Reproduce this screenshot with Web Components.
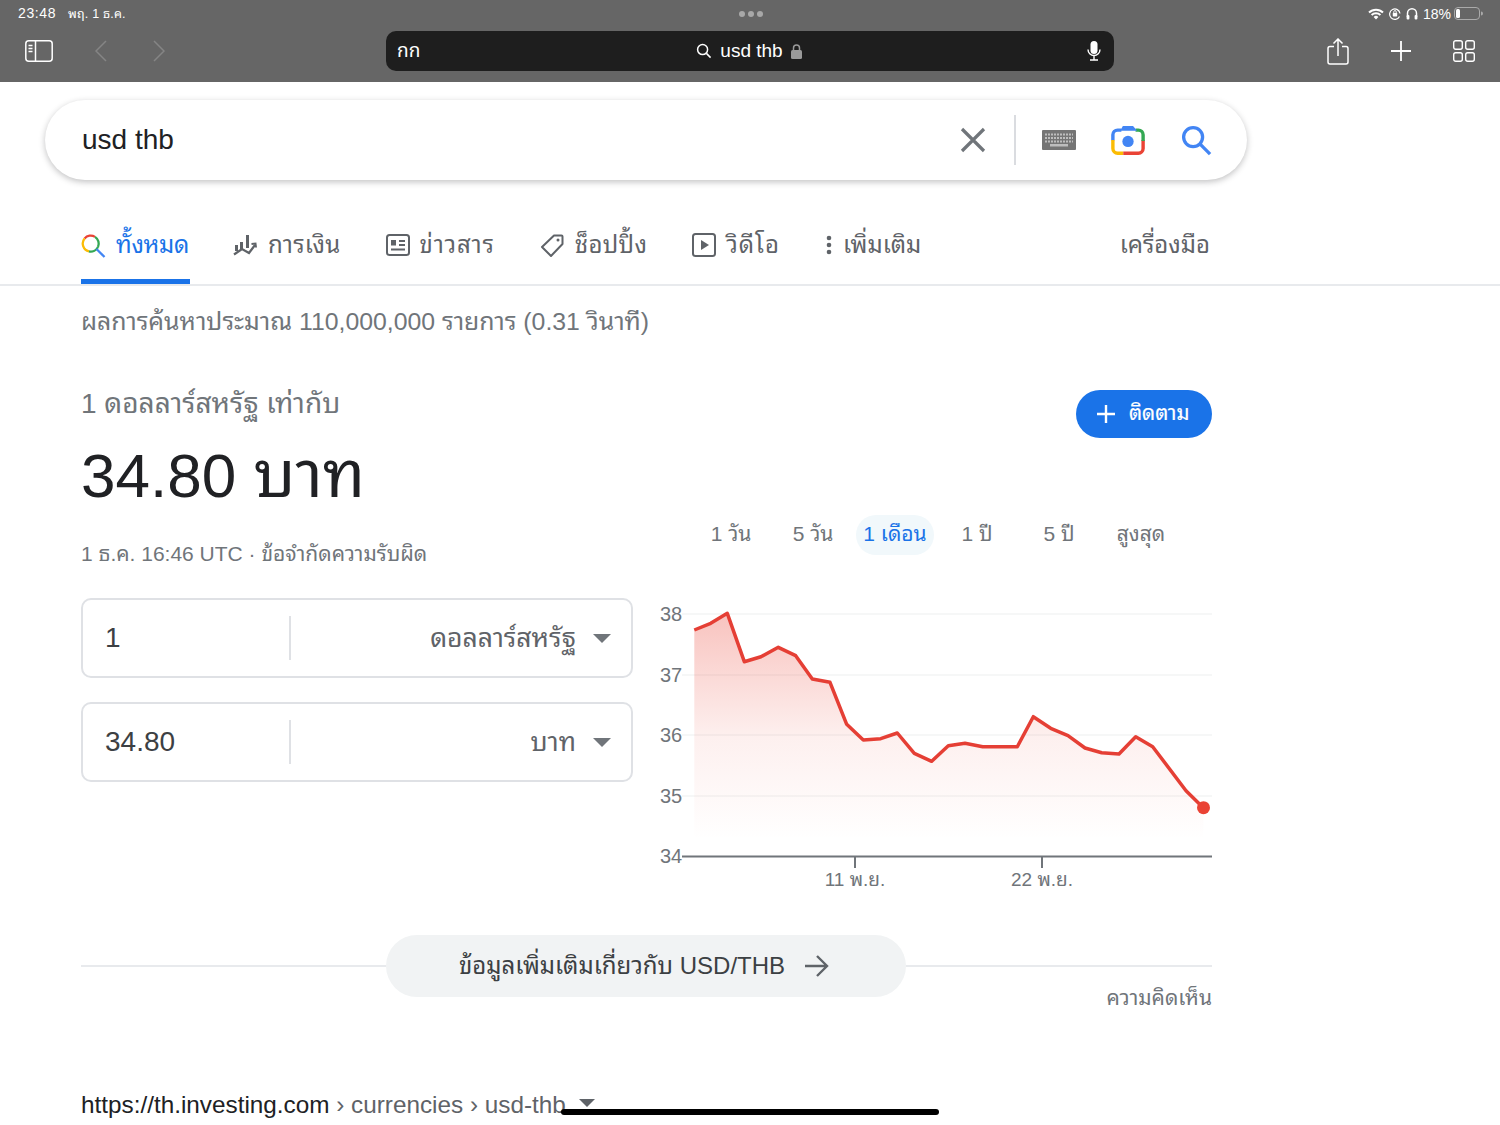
<!DOCTYPE html>
<html lang="th">
<head>
<meta charset="UTF-8">
<title>usd thb</title>
<style>
  html, body { margin: 0; padding: 0; background: #fff; }
  body { width: 1500px; height: 1125px; overflow: hidden; position: relative;
         font-family: "Liberation Sans", "Noto Sans Thai Looped", "Noto Serif Thai", Garuda, Loma, Waree, "TH Sarabun New", "Noto Sans", sans-serif; color: #202124; }
</style>
</head>
<body>
<safari-bar></safari-bar>
<search-box></search-box>
<search-tabs></search-tabs>
<result-stats></result-stats>
<currency-card></currency-card>
<more-about></more-about>
<result-link></result-link>
<home-bar></home-bar>

<script>
function make(name, html) {
  customElements.define(name, class extends HTMLElement {
    constructor() {
      super();
      this.attachShadow({mode: 'open'}).innerHTML = html;
    }
  });
}

make('safari-bar', `
<style>
  :host { display: block; height: 82px; background: #666; color: #fff; }
  .status { box-sizing: border-box; height: 29px; padding: 0 17px 2px 18px; display: grid; grid-template-columns: 1fr 30px 1fr; align-items: center; font-size: 14px; line-height: 16px; }
  .left { display: flex; gap: 12px; letter-spacing: .6px; align-items: baseline; }
  .left b { font-weight: 400; font-size: 12.500px; letter-spacing: .2px; }
  .dots { display: flex; gap: 3px; justify-content: center; }
  .dots i { width: 6px; height: 6px; border-radius: 50%; background: #a8a8a8; }
  .right { display: flex; gap: 5px; justify-content: flex-end; align-items: center; }
  .tools { height: 44px; padding: 0 25px; display: grid; grid-template-columns: 361px 728px 1fr; align-items: center; }
  .nav { display: flex; align-items: center; }
  .url { height: 40px; line-height: 40px; background: #1e1e1e; border-radius: 10px; padding: 0 13px 0 11px; display: grid; grid-template-columns: 1fr auto 1fr; align-items: center; font-size: 19px; }
  .mid { display: flex; align-items: center; gap: 8px; }
  .mic { justify-self: end; }
  .actions { display: flex; justify-content: flex-end; align-items: center; gap: 42px; }
  svg { display: block; }
</style>
<div class="status">
  <div class="left"><span>23:48</span><b>พฤ. 1 ธ.ค.</b></div>
  <div class="dots"><i></i><i></i><i></i></div>
  <div class="right">
    <svg width="16" height="12" viewBox="0 0 16 12"><path d="M1 4.500a10 10 0 0 1 14 0M3.600 7a6.400 6.400 0 0 1 8.800 0" fill="none" stroke="#fff" stroke-width="2"/><path d="M5.600 9a3.400 3.400 0 0 1 4.800 0L8 11.600z" fill="#fff"/></svg>
    <svg width="12" height="13" viewBox="0 0 12 13"><path d="M10.500 9.500A5.200 5.200 0 1 1 11 6.500" fill="none" stroke="#fff" stroke-width="1.200"/><rect x="3.800" y="6" width="4.400" height="3.400" rx=".6" fill="#fff"/><path d="M4.800 6V4.800a1.200 1.200 0 0 1 2.400 0V6" fill="none" stroke="#fff"/></svg>
    <svg width="12" height="13" viewBox="0 0 12 13"><path d="M1.500 10V6.300a4.500 4.500 0 0 1 9 0V10" fill="none" stroke="#fff" stroke-width="1.500"/><rect x=".6" y="8" width="2.800" height="4.500" rx="1" fill="#fff"/><rect x="8.600" y="8" width="2.800" height="4.500" rx="1" fill="#fff"/></svg>
    <span>18%</span>
    <svg style="margin-left:-2px" width="29" height="13" viewBox="0 0 29 13"><rect x=".5" y=".5" width="25" height="12" rx="3.500" fill="none" stroke="#aaa"/><rect x="2" y="2" width="4" height="9" rx="1.500" fill="#fff"/><path d="M27 4.500a2 2 0 0 1 0 4z" fill="#aaa"/></svg>
  </div>
</div>
<div class="tools">
  <div class="nav">
    <svg width="28" height="22" viewBox="0 0 28 22" fill="none" stroke="#fff" stroke-width="1.500"><rect x=".8" y=".8" width="26.400" height="20.400" rx="3"/><path d="M10.500 1v20"/><path d="M3.500 5.500h4M3.500 8.500h4M3.500 11.500h4" stroke-width="1.400"/></svg>
    <svg style="margin-left:42px" width="12" height="22" viewBox="0 0 12 22" fill="none" stroke="#858585" stroke-width="1.500"><path d="M11 1 1 11l10 10"/></svg>
    <svg style="margin-left:46px" width="12" height="22" viewBox="0 0 12 22" fill="none" stroke="#858585" stroke-width="1.500"><path d="m1 1 10 10L1 21"/></svg>
  </div>
  <div class="url">
    <span>กก</span>
    <div class="mid">
      <svg width="16" height="16" viewBox="0 0 16 16" fill="none" stroke="#fff" stroke-width="1.500"><circle cx="6.600" cy="6.600" r="5"/><path d="m10.400 10.400 4.200 4.200"/></svg>
      <span>usd thb</span>
      <svg width="11" height="15" viewBox="0 0 11 15"><rect y="6" width="11" height="9" rx="1.500" fill="#9a9a9a"/><path d="M2.500 6V4a3 3 0 0 1 6 0v2" fill="none" stroke="#9a9a9a" stroke-width="1.500"/></svg>
    </div>
    <svg class="mic" width="14" height="20" viewBox="0 0 14 20"><rect x="3.500" y="0" width="7" height="13" rx="3.500" fill="#fff"/><path d="M1 8.500a6 6 0 0 0 12 0M7 14.500V19M3 19h8" fill="none" stroke="#fff" stroke-width="1.400"/></svg>
  </div>
  <div class="actions">
    <svg width="22" height="27" viewBox="0 0 22 27" fill="none" stroke="#fff" stroke-width="1.500"><path d="M7 8.500H3a2 2 0 0 0-2 2v13.500a2 2 0 0 0 2 2h16a2 2 0 0 0 2-2V10.500a2 2 0 0 0-2-2h-4"/><path d="M11 18V1.500M6.500 5.500 11 1l4.500 4.500"/></svg>
    <svg width="20" height="20" viewBox="0 0 20 20" stroke="#fff" stroke-width="1.800"><path d="M10 0v20M0 10h20"/></svg>
    <svg width="22" height="22" viewBox="0 0 22 22" fill="none" stroke="#fff" stroke-width="1.400"><rect x=".7" y=".7" width="8.600" height="8.600" rx="2"/><rect x="12.700" y=".7" width="8.600" height="8.600" rx="2"/><rect x=".7" y="12.700" width="8.600" height="8.600" rx="2"/><rect x="12.700" y="12.700" width="8.600" height="8.600" rx="2"/></svg>
  </div>
</div>`);

make('search-box', `
<style>
  :host { display: flex; align-items: center; box-sizing: border-box; width: 1202px; height: 80px; margin: 18px 0 0 45px; padding: 0 35px 0 37px; background: #fff; border-radius: 40px; box-shadow: 0 2px 6px rgba(32,33,36,.28); font-size: 28px; }
  .q { flex: 1; }
  .sep { width: 2px; height: 50px; background: #dadce0; margin: 0 26px 0 27px; }
  svg { display: block; }
</style>
<span class="q">usd thb</span>
<svg width="28" height="28" viewBox="0 0 28 28" stroke="#70757a" stroke-width="3.200"><path d="m3 3 22 22M25 3 3 25"/></svg>
<div class="sep"></div>
<svg width="34" height="20" viewBox="0 0 34 20"><rect width="34" height="20" rx="1" fill="#757575"/><path d="M3 4.500h28M3 8h28M3 11.500h28" stroke="#bdbdbd" stroke-width="2" stroke-dasharray="2 1"/><rect x="8" y="14" width="18" height="2.500" fill="#bdbdbd"/></svg>
<svg style="margin-left:35px" width="34" height="32" viewBox="0 0 36 32" fill="none" stroke-width="3.600">
  <path d="M11 5.500h-4a5 5 0 0 0-5 5v6" stroke="#4285f4"/><path d="M2 16v9a5 5 0 0 0 5 5h6" stroke="#fbbc04"/>
  <path d="M13 30h16a5 5 0 0 0 5-5v-9" stroke="#ea4335"/><path d="M34 17v-6.500a5 5 0 0 0-5-5h-3" stroke="#34a853"/>
  <path d="M11 5.500 13 2h10l3 3.500z" fill="#4285f4" stroke="#4285f4" stroke-width="1.500"/>
  <circle cx="18" cy="17.500" r="6" fill="#4285f4" stroke="none"/></svg>
<svg style="margin-left:36px" width="31" height="31" viewBox="0 0 32 32" fill="none" stroke="#4285f4" stroke-width="3.400"><circle cx="12.500" cy="12.500" r="9.800"/><path d="m19.500 19.500 10.500 10.500"/></svg>`);

make('search-tabs', `
<style>
  :host { display: flex; box-sizing: border-box; height: 64px; margin-top: 42px; padding: 0 290px 0 81px; border-bottom: 2px solid #e8eaed; font-size: 24px; line-height: 30px; color: #5f6368; }
  .t { display: flex; align-items: center; gap: 10px; height: 62px; box-sizing: border-box; padding-bottom: 16px; margin-right: 45px; }
  .t.on { color: #1a73e8; border-bottom: 5px solid #1a73e8; padding-bottom: 11px; width: 109px; margin-right: 43px; }
  .t.end { margin: 0 0 0 auto; }
  svg { display: block; }
</style>
<div class="t on"><svg width="25" height="25" viewBox="0 0 25 25" fill="none" stroke-width="2.300"><path d="M3.600 5.400A8 8 0 0 1 14 3.900" stroke="#ea4335"/><path d="M14 3.900A8 8 0 0 1 17 14" stroke="#34a853"/><path d="M3.600 5.400A8 8 0 0 0 8 18.300" stroke="#fbbc04"/><path d="M8 18.300A8 8 0 0 0 17 14" stroke="#34a853"/><path d="m15.500 16 8 8" stroke="#4285f4"/></svg><span style="letter-spacing:-.3px">ทั้งหมด</span></div>
<div class="t" style="gap:11px"><svg width="24" height="24" viewBox="0 0 24 24" fill="none" stroke="#5f6368"><path d="M3.500 12v6M8.500 9v8M14.500 2v13" stroke-width="3"/><path d="m1 21.500 8-5.500 7 4 6-8" stroke-width="2.200"/><path d="m18.500 11 4-.5.500 4" stroke-width="2"/></svg><span style="letter-spacing:.3px">การเงิน</span></div>
<div class="t"><svg width="24" height="22" viewBox="0 0 24 22" fill="none" stroke="#5f6368" stroke-width="2"><rect x="1" y="1" width="22" height="20" rx="2.500"/><path d="M13 7h6M13 11h6M5 15.500h14"/><rect x="5" y="6" width="5" height="5.500" fill="#5f6368" stroke="none"/></svg><span style="letter-spacing:.9px">ข่าวสาร</span></div>
<div class="t"><svg width="25" height="25" viewBox="0 0 25 25" fill="none" stroke="#5f6368" stroke-width="2"><path d="M14 2.500h7.500a1 1 0 0 1 1 1V11L11 23 2 14z" stroke-linejoin="round"/><circle cx="18" cy="7" r="1.500" fill="#5f6368" stroke="none"/></svg><span style="letter-spacing:.3px">ช็อปปิ้ง</span></div>
<div class="t"><svg width="24" height="24" viewBox="0 0 24 24" fill="none" stroke="#5f6368" stroke-width="2"><rect x="1" y="1" width="22" height="22" rx="2.500"/><path d="M9 7v10l8-5z" fill="#5f6368" stroke="none"/></svg><span style="letter-spacing:1px">วิดีโอ</span></div>
<div class="t" style="margin:0"><svg width="8" height="20" viewBox="0 0 8 20" fill="#5f6368"><circle cx="4" cy="3" r="2.300"/><circle cx="4" cy="10" r="2.300"/><circle cx="4" cy="17" r="2.300"/></svg>เพิ่มเติม</div>
<div class="t end">เครื่องมือ</div>`);

make('result-stats', `
<style>
  :host { display: block; margin: 20px 0 0 81px; font-size: 24.800px; line-height: 32px; color: #70757a; }
</style>
ผลการค้นหาประมาณ 110,000,000 รายการ (0.31 วินาที)`);

make('currency-field', `
<style>
  :host { display: grid; grid-template-columns: 208px 1fr; align-items: center; box-sizing: border-box; width: 552px; height: 80px; border: 2px solid #dfe1e5; border-radius: 10px; font-size: 28px; color: #3c4043; }
  .v { padding-left: 22px; height: 44px; line-height: 44px; border-right: 2px solid #dfe1e5; }
  .u { display: flex; align-items: center; justify-content: flex-end; gap: 17px; padding-right: 20px; color: #5f6368; font-size: 26.500px; line-height: 44px; }
  i { border: 9px solid transparent; border-top: 9px solid #70757a; border-bottom: 0; width: 0; height: 0; }
</style>
<div class="v"><slot name="value"></slot></div>
<div class="u"><slot name="unit"></slot><i></i></div>`);

make('range-tabs', `
<style>
  :host { display: flex; justify-content: flex-end; padding-right: 30px; font-size: 21px; color: #70757a; }
  span { width: 82px; height: 40px; line-height: 38px; text-align: center; }
  .on { color: #1a73e8; width: 78px; margin: 0 2px; background: #f1f8fb; border-radius: 20px; }
</style>
<span>1 วัน</span><span>5 วัน</span><span class="on">1 เดือน</span><span>1 ปี</span><span>5 ปี</span><span>สูงสุด</span>`);

make('rate-chart', `
<style>
  :host { display: block; width: 560px; height: 300px; }
  svg { display: block; }
  text { font-family: inherit; font-size: 20px; fill: #70757a; }
  .tick { font-size: 19px; }
</style>
<svg width="560" height="300" viewBox="652 590 560 300">
  <defs><linearGradient id="fade" x1="0" y1="613" x2="0" y2="840" gradientUnits="userSpaceOnUse">
    <stop offset="0" stop-color="#ea4335" stop-opacity=".32"/><stop offset=".55" stop-color="#ea4335" stop-opacity=".08"/><stop offset="1" stop-color="#ea4335" stop-opacity="0"/></linearGradient></defs>
  <path d="M682 614h530M682 675h530M682 735h530M682 796h530" stroke="#f6f7f7" stroke-width="2"/>
  <path id="area" fill="url(#fade)"/>
  <path d="M682 856.500h530" stroke="#70757a" stroke-width="2"/>
  <path d="M855 857v11M1042 857v11" stroke="#70757a" stroke-width="2"/>
  <path id="line" fill="none" stroke="#e53f35" stroke-width="3.500" stroke-linejoin="round"/>
  <circle cx="1203.500" cy="807.700" r="6.500" fill="#ea4335"/>
  <text x="660" y="621">38</text><text x="660" y="682">37</text><text x="660" y="742">36</text><text x="660" y="803">35</text><text x="660" y="863">34</text>
  <text class="tick" x="855" y="886" text-anchor="middle">11 พ.ย.</text><text class="tick" x="1042" y="886" text-anchor="middle">22 พ.ย.</text>
</svg>`);

make('currency-card', `
<style>
  :host { display: block; margin: 0 0 0 81px; width: 1131px; }
  .top { display: flex; justify-content: space-between; align-items: flex-start; margin-top: 32px; }
  .lbl { font-size: 28px; line-height: 36px; color: #70757a; margin-top: 16px; }
  .rate { font-size: 62px; line-height: 76px; margin-top: 15px; color: #202124; }
  .rate span { font-size: 65px; }
  .follow { display: flex; align-items: center; gap: 14px; box-sizing: border-box; height: 48px; width: 136px; margin-top: 20px; padding: 0 0 3px 21px; background: #1a73e8; color: #fff; border-radius: 24px; font-size: 20.500px; line-height: 24px; -webkit-text-stroke: .2px #fff; }
  .follow svg { margin-top: 3px; }
  .time { font-size: 21px; line-height: 28px; color: #70757a; margin-top: 26px; }
  .head { display: flex; justify-content: space-between; align-items: flex-start; }
  .body { display: flex; justify-content: space-between; }
  .fields { display: flex; flex-direction: column; gap: 24px; padding-top: 30px; }
  range-tabs { margin-top: 1px; }
  rate-chart { margin-top: 22px; }
</style>
<div class="top">
  <div>
    <div class="lbl">1 ดอลลาร์สหรัฐ เท่ากับ</div>
    <div class="rate">34.80 <span>บาท</span></div>
  </div>
  <div class="follow"><svg width="18" height="18" viewBox="0 0 18 18" stroke="#fff" stroke-width="2.400"><path d="M9 0v18M0 9h18"/></svg>ติดตาม</div>
</div>
<div class="head">
  <div class="time">1 ธ.ค. 16:46 UTC · ข้อจำกัดความรับผิด</div>
  <range-tabs></range-tabs>
</div>
<div class="body">
  <div class="fields">
    <currency-field><span slot="value">1</span><span slot="unit">ดอลลาร์สหรัฐ</span></currency-field>
    <currency-field><span slot="value">34.80</span><span slot="unit">บาท</span></currency-field>
  </div>
  <rate-chart></rate-chart>
</div>`);

make('more-about', `
<style>
  :host { display: block; margin: 45px 0 0 81px; width: 1131px; }
  .row { display: flex; align-items: center; }
  .row::before, .row::after { content: ""; height: 2px; background: #e8eaed; }
  .row::before { width: 305px; }
  .row::after { flex: 1; }
  .pill { display: flex; align-items: center; justify-content: center; gap: 20px; width: 520px; height: 62px; padding-right: 4px; box-sizing: border-box; background: #f1f3f4; border-radius: 31px; font-size: 24px; line-height: 30px; color: #3c4043; }
  .fb { text-align: right; font-size: 21px; color: #70757a; line-height: 26px; margin-top: -12px; }
</style>
<div class="row"><div class="pill">ข้อมูลเพิ่มเติมเกี่ยวกับ USD/THB <svg width="24" height="22" viewBox="0 0 24 22" fill="none" stroke="#5f6368" stroke-width="2.400"><path d="M0 11h22M12 1l10 10-10 10"/></svg></div></div>
<div class="fb">ความคิดเห็น</div>`);

make('result-link', `
<style>
  :host { display: flex; align-items: center; margin: 78px 0 0 81px; font-size: 24.300px; line-height: 32px; color: #5f6368; }
  b { font-weight: 400; color: #202124; }
  i { margin: -4px 0 0 13px; border: 8px solid transparent; border-top: 8px solid #5f6368; border-bottom: 0; }
</style>
<b>https://th.investing.com</b>&nbsp;› currencies › usd-thb<i></i>`);

make('home-bar', `
<style>
  :host { position: absolute; left: 561px; top: 1109px; width: 378px; height: 6px; border-radius: 3px; background: #000; }
</style>`);

// chart line from the sampled rate points
const pts = [[694.3,630],[710.7,623.3],[727.3,613.3],[744.3,661.7],[761,656.7],[778.3,647.3],[795.7,655.7],[812.3,679],[830,682.3],[846.7,724.3],[863.3,740],[880.7,738.7],[897.3,733],[914.3,753.3],[931.7,761.3],[948.3,745.7],[965,743.3],[982.7,746.7],[1017.3,746.7],[1033.3,716.7],[1050.7,728.3],[1068,735.7],[1085,748],[1101.7,752.7],[1119,754],[1135.7,736.7],[1152.7,746.7],[1186,790.7],[1203.3,807.7]];
const d = 'M' + pts.map(p => p.join(' ')).join('L');
const chart = document.querySelector('currency-card').shadowRoot.querySelector('rate-chart').shadowRoot;
chart.getElementById('line').setAttribute('d', d);
chart.getElementById('area').setAttribute('d', d + 'L1203.3 840L694.3 840Z');
</script>
</body>
</html>
